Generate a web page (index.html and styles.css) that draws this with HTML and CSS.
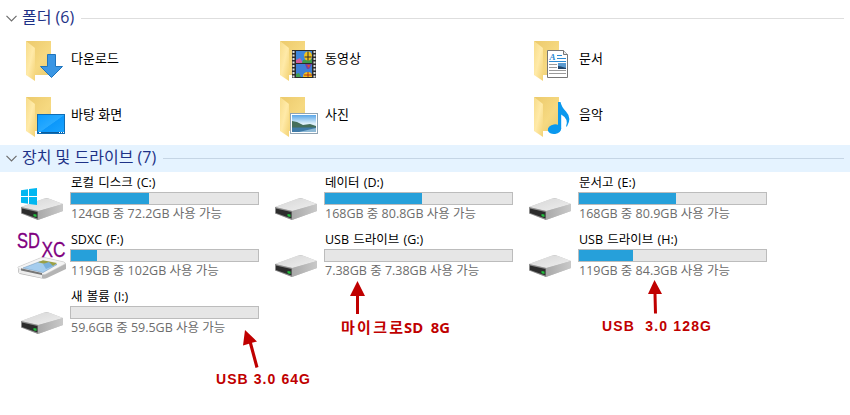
FILE: index.html
```html
<!DOCTYPE html>
<html lang="ko">
<head>
    <meta charset="UTF-8">
    <meta name="viewport" content="width=device-width, initial-scale=1.0">
    <title>내 PC</title>
    <link rel="stylesheet" href="styles.css">
</head>
<body>

    <!-- Shared icon shapes -->
    <svg class="defs" width="0" height="0">
        <defs>
            <linearGradient id="flap" x1="0" y1="0" x2="1" y2="1">
                <stop offset="0" stop-color="#f7dc8a"/>
                <stop offset="0.5" stop-color="#ffeaa8"/>
                <stop offset="1" stop-color="#f3d274"/>
            </linearGradient>
            <linearGradient id="back" x1="0" y1="0" x2="1" y2="1">
                <stop offset="0" stop-color="#ecca6c"/>
                <stop offset="0.6" stop-color="#f6d981"/>
                <stop offset="1" stop-color="#e9cb72"/>
            </linearGradient>
            <linearGradient id="driveTop" x1="0" y1="0" x2="1" y2="1">
                <stop offset="0" stop-color="#d6d6d6"/>
                <stop offset="1" stop-color="#efefef"/>
            </linearGradient>
            <linearGradient id="driveSide" x1="0" y1="0" x2="1" y2="0">
                <stop offset="0" stop-color="#a9a9a9"/>
                <stop offset="1" stop-color="#c9c9c9"/>
            </linearGradient>
            <linearGradient id="screen" x1="0" y1="0" x2="1" y2="1">
                <stop offset="0" stop-color="#0b9bff"/>
                <stop offset="0.5" stop-color="#28aaff"/>
                <stop offset="0.52" stop-color="#0c98fb"/>
                <stop offset="1" stop-color="#1ba4ff"/>
            </linearGradient>
            <linearGradient id="sky" x1="0" y1="0" x2="0" y2="1">
                <stop offset="0" stop-color="#5aa6e8"/>
                <stop offset="0.5" stop-color="#dceff9"/>
            </linearGradient>
            <symbol id="folder" viewBox="0 0 44 44">
                <path d="M1 1H26V35H9Z" fill="url(#back)"/>
                <path d="M1 1L10 8V41L1 35Z" fill="url(#flap)"/>
            </symbol>
            <symbol id="drive" viewBox="0 0 54 54">
                <path d="M5 33L30 24Q32 24 34 25L47 30V37L22 46L5 39Z" fill="#c4c4c4"/>
                <path d="M5 33L28 24.600Q31 24 34 25L47 30L23 37Z" fill="url(#driveTop)"/>
                <path d="M22 37L47 30V37L22 46Z" fill="url(#driveSide)"/>
                <path d="M5 33L22 37V46L5 39.500Z" fill="#8c8c8c"/>
                <path d="M6 34.500L21.500 38V44.500L6 39Z" fill="#2c2c2c"/>
                <path d="M17.500 40L20.500 40.600V43L17.500 42.200Z" fill="#1fc13c"/>
            </symbol>
        </defs>
    </svg>

    <section class="group">
        <h2 class="group-title">
            <svg class="chevron" width="11" height="7" viewBox="0 0 11 7"><path d="M0.500 0.800L5.500 5.800L10.500 0.800"/></svg>
            <span class="group-name">폴더 (6)</span>
        </h2>
        <div class="folders">
            <div class="folder">
                <svg class="folder-icon" viewBox="0 0 44 44"><use href="#folder"/>
                    <path d="M22.500 14.500H30.500V26.500H37.500L26.500 37.500L15.500 26.500H22.500Z" fill="#3a96e4" stroke="#1f74bd"/>
                </svg>
                <span class="folder-name">다운로드</span>
            </div>
            <div class="folder">
                <svg class="folder-icon" viewBox="0 0 44 44"><use href="#folder"/>
                    <rect x="13" y="10" width="24" height="28" fill="#2b2b2b"/>
                    <path d="M14.500 11V38M35.500 11V38" stroke="#ddd" stroke-width="2" stroke-dasharray="2 1.500"/>
                    <rect x="17" y="11" width="16" height="12" fill="#3f86dc"/>
                    <rect x="17" y="24" width="16" height="13" fill="#3f7fd6"/>
                    <path d="M17 20L21 18L24 23H17Z" fill="#d45c9a"/>
                    <path d="M24 20L33 19V23H23Z" fill="#3f9a4a"/>
                    <ellipse cx="29" cy="16" rx="4" ry="4.500" fill="#f2c21c"/>
                    <path d="M29 11.500V20.500M25.500 17H32.500" stroke="#33302a"/>
                    <path d="M26 24H33L30 29H28Z" fill="#7b3fa0"/>
                    <path d="M28 25H31L30 28Z" fill="#e05020"/>
                    <path d="M24 37Q24 32 29 32Q33 32 33 36V37Z" fill="#f2c21c"/>
                    <path d="M29 32V37M25 35H33" stroke="#b03020"/>
                    <path d="M17 37V34L20 33L22 37Z" fill="#43a050"/>
                </svg>
                <span class="folder-name">동영상</span>
            </div>
            <div class="folder">
                <svg class="folder-icon" viewBox="0 0 44 44"><use href="#folder"/>
                    <path d="M14.500 10.500H30.500L34.500 14.500V37.500H14.500Z" fill="#fff" stroke="#777"/>
                    <path d="M30.500 10.500V14.500H34.500" fill="#e8e8e8" stroke="#777"/>
                    <text class="doc-letter" x="16.500" y="19.500">A</text>
                    <path d="M24 15.500H29M24 18.500H33M16 21.500H33" stroke="#2b8ad2"/>
                    <path d="M16 24.500H24M16 27.500H24M16 30.500H33M16 33.500H33" stroke="#9b9b9b"/>
                    <rect x="25" y="23" width="8" height="6" fill="#5b9bd0"/>
                    <path d="M25 29V26L28 26.500L33 28V29Z" fill="#20456b"/>
                </svg>
                <span class="folder-name">문서</span>
            </div>
            <div class="folder">
                <svg class="folder-icon" viewBox="0 0 44 44"><use href="#folder"/>
                    <rect x="12.500" y="18.500" width="27" height="19" fill="url(#screen)" stroke="#0f6db5"/>
                    <path d="M13 36.500H39" stroke="#0b5c9c"/>
                    <path d="M14 36.500H16M34 36.500H35M36 36.500H37M38 36.500H39" stroke="#fff"/>
                </svg>
                <span class="folder-name">바탕 화면</span>
            </div>
            <div class="folder">
                <svg class="folder-icon" viewBox="0 0 44 44"><use href="#folder"/>
                    <rect x="11.500" y="17.500" width="27" height="20" fill="#fff" stroke="#8fa3b3"/>
                    <rect x="13" y="19" width="24" height="17" fill="url(#sky)"/>
                    <path d="M13 25L18 26L24 29L31 28L37 30V32H13Z" fill="#456f5c"/>
                    <path d="M13 31.500H37V36H13Z" fill="#3f7ba8"/>
                    <path d="M20 36L37 32V36Z" fill="#8fbad6"/>
                </svg>
                <span class="folder-name">사진</span>
            </div>
            <div class="folder">
                <svg class="folder-icon" viewBox="0 0 44 44"><use href="#folder"/>
                    <ellipse cx="21.500" cy="33.200" rx="6.700" ry="4.800" transform="rotate(-8 21.500 33.200)" fill="#0a98ee"/>
                    <path d="M25 6H27.500Q28.500 11 33 15.500Q39 22 34 30.500H33Q36 23 28.200 18.500V33H25Z" fill="#0a98ee"/>
                </svg>
                <span class="folder-name">음악</span>
            </div>
        </div>
    </section>

    <section class="group">
        <h2 class="group-title selected">
            <svg class="chevron" width="11" height="7" viewBox="0 0 11 7"><path d="M0.500 0.800L5.500 5.800L10.500 0.800"/></svg>
            <span class="group-name">장치 및 드라이브 (7)</span>
        </h2>
        <div class="drives">
            <div class="drive">
                <svg class="drive-icon" viewBox="0 0 54 54"><use href="#drive"/>
                    <path d="M5 16.200L12 15.200V22H5ZM13 15L21 14V22H13ZM5 23H12V29.800L5 28.800ZM13 23H21V31L13 30Z" fill="#00b7f1"/>
                </svg>
                <div class="drive-info">
                    <div class="drive-name">로컬 디스크 (C:)</div>
                    <div class="bar"><div class="used" style="width: 41.7%"></div></div>
                    <div class="space">124GB 중 72.2GB 사용 가능</div>
                </div>
            </div>
            <div class="drive">
                <svg class="drive-icon" viewBox="0 0 54 54"><use href="#drive"/></svg>
                <div class="drive-info">
                    <div class="drive-name">데이터 (D:)</div>
                    <div class="bar"><div class="used" style="width: 51.8%"></div></div>
                    <div class="space">168GB 중 80.8GB 사용 가능</div>
                </div>
            </div>
            <div class="drive">
                <svg class="drive-icon" viewBox="0 0 54 54"><use href="#drive"/></svg>
                <div class="drive-info">
                    <div class="drive-name">문서고 (E:)</div>
                    <div class="bar"><div class="used" style="width: 51.8%"></div></div>
                    <div class="space">168GB 중 80.9GB 사용 가능</div>
                </div>
            </div>
            <div class="drive">
                <svg class="drive-icon" viewBox="0 0 54 54">
                    <path d="M2 36L24 27Q28 26 31 27L48 31Q50 32 50 34V38L31 47Q29 48 26 47.500L4 43Q2 42 2 40Z" fill="#b4b4b4"/>
                    <path d="M2 36L24 27Q28 26 31 27L48 31Q50 32 49 33L30 43Q28 44 25 43L3 38Q1 37 2 36Z" fill="#f4f4f4" stroke="#c8c8c8" stroke-width="0.500"/>
                    <path d="M2.500 38L26 43.500V47L3 42Z" fill="#ececec"/>
                    <path d="M5 37.200L26 42V44L5 39.500Z" fill="#777"/>
                    <path d="M7 37L24 30.500L41 33.500L27 41.500Z" fill="#a5cdee" stroke="#6b93b8" stroke-width="0.500"/>
                    <path d="M22 31.300L27 29.300L41 32L37 35Z" fill="#9ba046"/>
                    <path d="M27 33L33 31L37 35L30 38Z" fill="#79b0dc"/>
                    <text class="sdxc" x="1" y="17" textLength="23" lengthAdjust="spacingAndGlyphs">SD</text>
                    <text class="sdxc" x="25.500" y="25.500" textLength="24" lengthAdjust="spacingAndGlyphs">XC</text>
                </svg>
                <div class="drive-info">
                    <div class="drive-name">SDXC (F:)</div>
                    <div class="bar"><div class="used" style="width: 13.9%"></div></div>
                    <div class="space">119GB 중 102GB 사용 가능</div>
                </div>
            </div>
            <div class="drive">
                <svg class="drive-icon" viewBox="0 0 54 54"><use href="#drive"/></svg>
                <div class="drive-info">
                    <div class="drive-name">USB 드라이브 (G:)</div>
                    <div class="bar"></div>
                    <div class="space">7.38GB 중 7.38GB 사용 가능</div>
                </div>
            </div>
            <div class="drive">
                <svg class="drive-icon" viewBox="0 0 54 54"><use href="#drive"/></svg>
                <div class="drive-info">
                    <div class="drive-name">USB 드라이브 (H:)</div>
                    <div class="bar"><div class="used" style="width: 28.9%"></div></div>
                    <div class="space">119GB 중 84.3GB 사용 가능</div>
                </div>
            </div>
            <div class="drive">
                <svg class="drive-icon" viewBox="0 0 54 54"><use href="#drive"/></svg>
                <div class="drive-info">
                    <div class="drive-name">새 볼륨 (I:)</div>
                    <div class="bar"></div>
                    <div class="space">59.6GB 중 59.5GB 사용 가능</div>
                </div>
            </div>
        </div>
    </section>

    <!-- Red notes over the drive list -->
    <svg class="notes" viewBox="0 0 850 415">
        <path d="M357.500 281L365 296H359V314H356V296H350Z"/>
        <path d="M654.500 280L662 294H656.500L657 313.500H654L653.500 294H648Z"/>
        <path d="M245 330L257 341.500L252 342.800L258.500 367L255.500 368L249 343.800L243 345.500Z"/>
        <text class="note-mixed" x="341" y="333" textLength="62">마이크로</text>
        <text class="note-mixed" x="404" y="333" textLength="46" lengthAdjust="spacingAndGlyphs">SD&#160; 8G</text>
        <text class="note-bold" x="602" y="331" textLength="109">USB&#160; 3.0 128G</text>
        <text class="note-bold" x="216" y="384" textLength="94">USB 3.0 64G</text>
    </svg>

</body>
</html>
```

FILE: styles.css
```css
body {
    margin: 0;
    height: 415px;
    overflow: hidden;
    position: relative;
    background: #fff;
    color: #000;
    font-family: "Open Sans", "Noto Sans CJK KR", sans-serif;
    font-size: 12.5px;
}
.defs { position: absolute; }

.group-title {
    display: flex;
    align-items: center;
    height: 27px;
    margin: 0;
    padding: 0 6px;
    font-size: 16px;
    font-weight: normal;
    color: #1e3287;
}
.group:first-of-type .group-title { padding-top: 5px; }
.group-title::after {
    content: "";
    flex: 1;
    height: 1px;
    margin-left: 7px;
    background: #dedede;
}
.group-title.selected { background: #e5f3ff; }
.group-title.selected::after { background: #c5d5e5; }
.group-name { margin-left: 5px; padding-bottom: 3px; line-height: 24px; white-space: pre; }
.chevron path { fill: none; stroke: #6d6d6d; stroke-width: 1.2; }

.folders {
    display: grid;
    grid-template-columns: repeat(3, 254px);
    grid-auto-rows: 56px;
    padding: 1px 0 0 25px;
}
.folder { display: flex; align-items: flex-start; }
.folder-icon { width: 44px; height: 44px; margin-top: 7px; }
.folder-name { margin: 16px 0 0 2px; line-height: 18px; font-size: 13px; }
.doc-letter { font: italic bold 9px "Liberation Serif", serif; fill: #2b8ad2; }

.drives {
    display: grid;
    grid-template-columns: repeat(3, 254px);
    grid-auto-rows: 57px;
    padding: 2px 0 0 16px;
}
.drive { display: flex; }
.drive-icon { width: 54px; height: 54px; overflow: visible; }
.drive-info { width: 189px; }
.drive-name, .space { height: 16px; padding-left: 1px; white-space: nowrap; }
.drive-name { line-height: 18px; word-spacing: 1px; }
.space { line-height: 16px; color: #6d6d6d; }
.bar {
    height: 13px;
    margin: 2px 0 1px;
    box-sizing: border-box;
    border: 1px solid #bcbcbc;
    background: #e6e6e6;
}
.used { height: 100%; background: #26a0da; }
.sdxc { font: 22px "Liberation Sans", sans-serif; fill: #800080; stroke: #800080; stroke-width: 0.3; }

.notes { position: absolute; left: 0; top: 0; width: 850px; height: 415px; fill: #c00000; }
.note-mixed { font: bold 15px "Open Sans", "Noto Sans CJK KR", sans-serif; }
.note-bold { font: bold 14px "Liberation Sans", sans-serif; }
```
